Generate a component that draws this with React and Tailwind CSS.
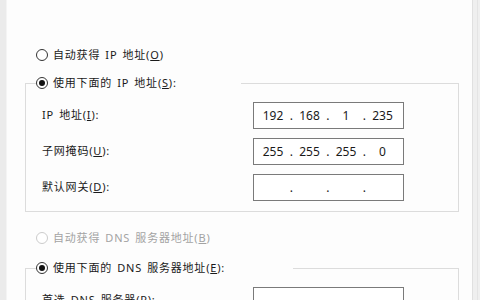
const font = {
  fontFamily: '"Noto Sans", "Noto Sans CJK SC", sans-serif',
};

function Radio({ checked, disabled }) {
  return (
    <span
      className={
        "flex h-[12px] w-[12px] shrink-0 items-center justify-center rounded-full border bg-white " +
        (disabled ? "border-[#cccccc]" : "border-[#333333]")
      }
    >
      {checked && <span className="h-[6px] w-[6px] rounded-full bg-[#111111]" />}
    </span>
  );
}

function Caption({ checked, disabled, children, width }) {
  return (
    <div className={"flex h-[18px] shrink-0 items-center gap-[5px] " + width}>
      <Radio checked={checked} disabled={disabled} />
      <span className={"whitespace-nowrap " + (disabled ? "text-[#a3a3a3]" : "text-[#1a1a1a]")}>
        {children}
      </span>
    </div>
  );
}

function IpBox({ parts }) {
  return (
    <div className="flex h-[27px] w-[151px] items-center border border-[#7a7a7a] bg-white pl-[4px] text-[12px] tracking-normal text-[#1a1a1a]">
      {parts.map((p, i) => (
        <div key={i} className="flex items-center">
          <span className="w-[30px] text-center">{p}</span>
          {i < 3 && <span className="w-[6.5px] text-center">.</span>}
        </div>
      ))}
    </div>
  );
}

function Row({ label, acc, parts }) {
  return (
    <div className="flex h-[27px] items-center">
      <span className="w-[211px] text-[#1a1a1a]">
        {label}(<span className="underline">{acc}</span>):
      </span>
      <IpBox parts={parts} />
    </div>
  );
}

function GroupHead({ children }) {
  return (
    <div className="flex h-[18px] items-end">
      <div className="h-[9px] w-[11px] border-l border-t border-[#dcdcdc]" />
      {children}
      <div className="h-[9px] flex-1 border-r border-t border-[#dcdcdc]" />
    </div>
  );
}

export default function App() {
  return (
    <div
      className="flex h-[300px] w-[480px] overflow-hidden bg-[#fdfdfd] text-[11px] tracking-[0.8px] [word-spacing:1.5px]"
      style={font}
    >
      <div className="w-[7px] border-r border-[#f4f4f4] bg-[#ebebeb]" />

      <div className="flex flex-1 flex-col pl-[18px] pr-[13px] pt-[46px]">
        <div className="pl-[11px]">
          <Caption>
            自动获得 IP 地址(<span className="underline">O</span>)
          </Caption>
        </div>

        <div className="mt-[10px]">
          <GroupHead>
            <Caption checked width="w-[205px]">
              使用下面的 IP 地址(<span className="underline">S</span>):
            </Caption>
          </GroupHead>
          <div className="flex flex-col gap-[9px] border-b border-l border-r border-[#dcdcdc] pb-[10px] pl-[16px] pt-[10px]">
            <Row label="IP 地址" acc="I" parts={["192", "168", "1", "235"]} />
            <Row label="子网掩码" acc="U" parts={["255", "255", "255", "0"]} />
            <Row label="默认网关" acc="D" parts={["", "", "", ""]} />
          </div>
        </div>

        <div className="mt-[17px] pl-[11px]">
          <Caption disabled>
            自动获得 DNS 服务器地址(<span className="underline">B</span>)
          </Caption>
        </div>

        <div className="mt-[12px]">
          <GroupHead>
            <Caption checked width="w-[257px]">
              使用下面的 DNS 服务器地址(<span className="underline">E</span>):
            </Caption>
          </GroupHead>
          <div className="flex flex-col gap-[9px] border-l border-r border-[#dcdcdc] pl-[16px] pt-[10px]">
            <Row label="首选 DNS 服务器" acc="P" parts={["", "", "", ""]} />
          </div>
        </div>
      </div>

      <div className="flex w-[8px] border-l border-[#e0e0e0] bg-[#efefef]">
        <div className="ml-[4px] w-px bg-[#e4e4e4]" />
      </div>
    </div>
  );
}
